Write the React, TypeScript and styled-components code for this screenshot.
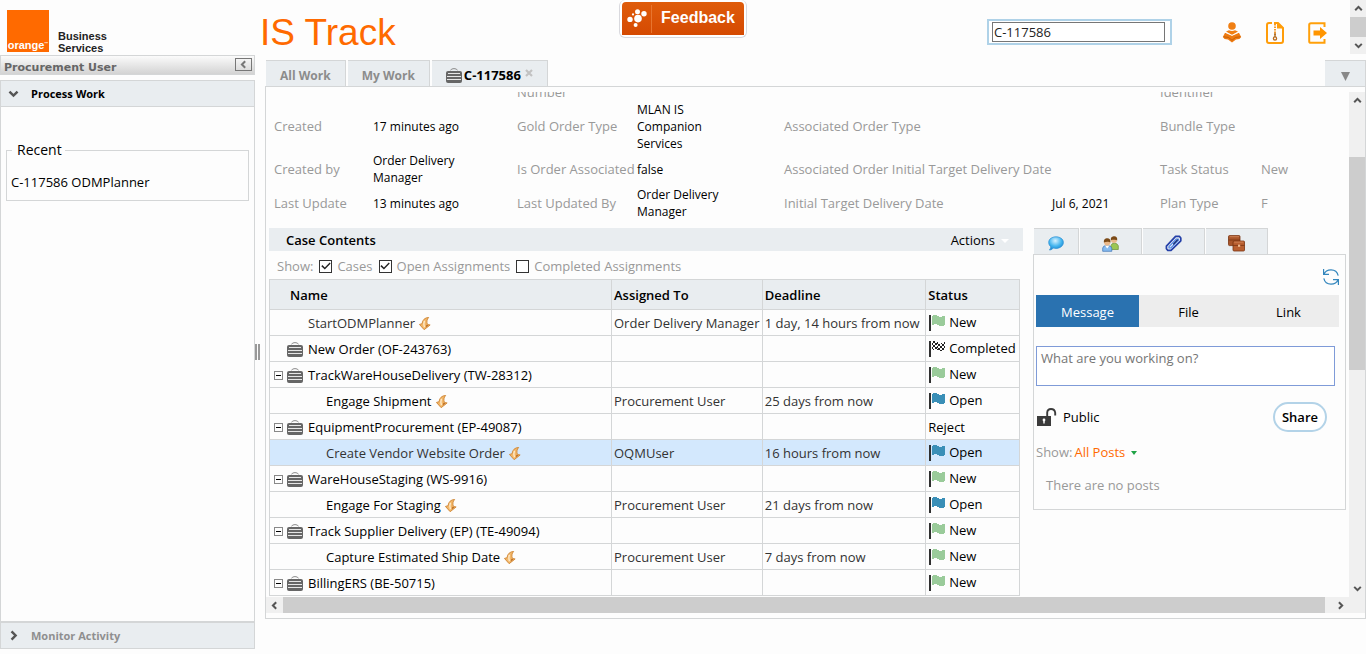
import React from "react";
import styled, { createGlobalStyle, css } from "styled-components";

const line = "#d4d6d7";
const panel = "#e9edf0";
const grey = "#999999";
const orange = "#ff6a00";

const GlobalStyle = createGlobalStyle`
  * { box-sizing: border-box; }
  body {
    margin: 0;
    background: #fdfdfd;
    color: #000;
    font: 13px/17px "Open Sans", "Noto Sans", sans-serif;
  }
  button {
    font: inherit;
    color: inherit;
    background: none;
    border: 0;
    padding: 0;
    cursor: pointer;
  }
  a { color: inherit; text-decoration: none; }
  svg { display: block; flex: none; }
`;

const Page = styled.div`
  display: flex;
  flex-direction: column;
  min-height: 100vh;
  overflow: hidden;
`;

/* ---------- header ---------- */

const Header = styled.header`
  display: grid;
  grid-template-columns: 1fr auto 1fr;
  height: 55px;
`;

const BrandArea = styled.div`
  display: flex;
  align-items: flex-start;
`;

const Brand = styled.a`
  display: flex;
  align-items: flex-end;
  gap: 9px;
  width: 260px;
  padding: 10px 0 0 7px;
`;

const LogoSquare = styled.span`
  display: flex;
  align-items: flex-end;
  justify-content: center;
  width: 42px;
  height: 42px;
  background: ${orange};
  color: #fff;
  font: bold 11px/13px "Liberation Sans", Arial, sans-serif;

  sup {
    font-size: 4px;
    line-height: 8px;
    align-self: flex-end;
    margin-bottom: 4px;
  }
`;

const BrandName = styled.span`
  font: bold 11px/12px "Liberation Sans", Arial, sans-serif;
  color: #222;
  margin-bottom: -2px;
`;

const Title = styled.h1`
  margin: 0;
  padding-top: 12px;
  color: ${orange};
  font: 37px/42px "Liberation Sans", Arial, sans-serif;
  white-space: nowrap;
`;

const FeedbackButton = styled.button`
  display: flex;
  align-self: start;
  align-items: stretch;
  height: 38px;
  border: 1px solid #d9d9de;
  border-top: 0;
  border-radius: 6px;
  padding: 2px;
  background: #fff;
`;

const FeedbackFace = styled.span`
  display: flex;
  align-items: center;
  width: 122px;
  border-radius: 4px 4px 0 0;
  background: linear-gradient(#df5c0b, #d54a02);
  color: #fff;
  font: bold 16px/20px "Liberation Sans", Arial, sans-serif;
`;

const FeedbackMark = styled.span`
  display: flex;
  width: 30px;
  height: 28px;
  align-items: center;
  justify-content: center;
  border-right: 1px solid #e8752f;
`;

const FeedbackLabel = styled.span`
  flex: 1;
  padding-bottom: 2px;
  text-align: center;
`;

const HeaderTools = styled.div`
  display: flex;
  justify-content: flex-end;
  align-items: flex-start;
`;

const SearchFrame = styled.div`
  width: 185px;
  height: 26px;
  margin: 19px 50px 0 0;
  padding: 1px 5px 1px 3px;
  border: 2px solid #afd2e8;
  background: #fff;
`;

const SearchInput = styled.input`
  display: block;
  width: 100%;
  height: 20px;
  padding: 0 1px;
  border: 1px solid #767676;
  border-radius: 0;
  color: #222;
  font: inherit;
`;

const ToolIcons = styled.nav`
  display: flex;
  gap: 23px;
  padding: 22px 22px 0 0;
`;

const ScrollTrack = styled.div<{ $horizontal?: boolean }>`
  display: flex;
  flex: none;
  justify-content: space-between;
  background: #f0f0f0;
  ${(p) =>
    p.$horizontal
      ? css`
          height: 16px;
        `
      : css`
          flex-direction: column;
          width: 16px;
        `}
`;

const ScrollArrow = styled.button<{ $horizontal?: boolean }>`
  display: flex;
  flex: none;
  align-items: center;
  justify-content: center;
  width: ${(p) => (p.$horizontal ? 17 : 16)}px;
  height: ${(p) => (p.$horizontal ? 16 : 17)}px;
  color: #555;
`;

const ScrollThumb = styled.div`
  background: #cdcdcd;
`;

const HeaderThumb = styled(ScrollThumb)`
  height: 20px;
`;

/* ---------- body ---------- */

const Body = styled.div`
  display: grid;
  flex: 1;
  grid-template-columns: 255px 10px minmax(0, 1fr);
  padding-bottom: 5px;
`;

const Sidebar = styled.aside`
  display: flex;
  flex-direction: column;
`;

const UserBar = styled.div`
  display: flex;
  align-items: flex-end;
  justify-content: space-between;
  height: 20px;
  margin-bottom: 5px;
  padding: 0 2px 0 3px;
  border: 1px solid ${line};
  background: linear-gradient(#fbfbfb, #d3d3d3);
  color: #666;
  font: bold 11px/12px "DejaVu Sans", Verdana, sans-serif;
`;

const CollapseButton = styled.button`
  display: flex;
  align-self: flex-start;
  align-items: center;
  justify-content: center;
  width: 17px;
  height: 13px;
  margin-top: 2px;
  border: 1px solid #777;
  color: #777;
`;

const AccordionHead = styled.button<{ $muted?: boolean }>`
  display: flex;
  align-items: center;
  height: ${(p) => (p.$muted ? 28 : 27)}px;
  padding: 0 7px;
  gap: 12px;
  border: 1px solid ${line};
  border-top-width: ${(p) => (p.$muted ? 2 : 1)}px;
  background: ${panel};
  color: ${(p) => (p.$muted ? "#8f8f8f" : "#000")};
  font-size: 11px;
  font-weight: 700;

  svg { color: #555; }
`;

const AccordionBody = styled.div`
  flex: 1;
  padding: 34px 5px 0;
  border: solid ${line};
  border-width: 0 1px;
`;

const Recent = styled.fieldset`
  height: 60px;
  margin: 0;
  padding: 15px 4px 0;
  border: 1px solid ${line};

  legend {
    margin-left: 1px;
    padding: 0 3px 0 5px;
    font-size: 14px;
    line-height: 18px;
  }
`;

const Splitter = styled.div`
  align-self: center;
  width: 5px;
  height: 16px;
  border: solid #999;
  border-width: 0 2px;
`;

const Main = styled.main`
  padding-top: 5px;
`;

const TabStrip = styled.div`
  display: flex;
  gap: 2px;
  height: 26px;
  padding-left: 1px;
`;

const Tab = styled.button<{ $active?: boolean }>`
  display: flex;
  align-items: center;
  gap: 2px;
  padding: 3px 14px 0;
  border: solid ${line};
  border-width: 1px 1px 0 0;
  background: ${panel};
  color: ${(p) => (p.$active ? "#000" : "#8c8c8c")};
  font-size: ${(p) => (p.$active ? 13 : 12)}px;
  font-weight: 700;
  white-space: nowrap;

  svg:last-child { align-self: flex-start; margin: 5px 0 0 2px; }
`;

const TabMenu = styled.button`
  width: 41px;
  margin-left: auto;
  border: solid ${line};
  border-width: 1px 1px 0 0;
  background: ${panel};
  display: flex;
  align-items: center;
  justify-content: center;
  padding-top: 6px;
`;

const Workspace = styled.section`
  display: grid;
  grid-template-columns: minmax(0, 1fr) 16px;
  padding: 5px 0 5px;
  border: 1px solid ${line};
`;

const Content = styled.div`
  min-width: 0;
`;

const SideTrack = styled(ScrollTrack)`
  display: grid;
  grid-template-rows: 17px 48px 213px 1fr 17px 16px;
`;

const BottomTrack = styled(ScrollTrack)`
  display: grid;
  grid-template-columns: 17px 1fr 7px 17px;
  margin: 1px 0 0;
`;

/* ---------- case details ---------- */

const Details = styled.dl`
  display: grid;
  grid-template-columns: 99fr 144fr 120fr 147fr 268fr 108fr 101fr 88fr;
  align-items: center;
  margin: 0 0 8px;
  padding-left: 8px;
`;

const Label = styled.dt<{ $cut?: boolean }>`
  color: ${grey};
  white-space: nowrap;
  ${(p) =>
    p.$cut &&
    css`
      display: flex;
      align-items: flex-end;
      height: 9px;
      overflow: hidden;
    `}
`;

const Value = styled.dd<{ $muted?: boolean }>`
  margin: 0;
  padding-right: 44px;
  font-size: ${(p) => (p.$muted ? 13 : 12)}px;
  color: ${(p) => (p.$muted ? grey : "#000")};
`;

const Columns = styled.div`
  display: flex;
  align-items: flex-start;
  gap: 10px;
  padding: 0 3px;
`;

const Contents = styled.section`
  flex: 1;
  min-width: 0;
`;

const ContentsHead = styled.header`
  display: flex;
  align-items: center;
  justify-content: space-between;
  height: 23px;
  padding: 2px 14px 0 17px;
  background: ${panel};

  h2 {
    margin: 0;
    font-size: 13px;
    font-weight: 600;
  }
`;

const ActionsButton = styled.button`
  display: flex;
  align-items: center;
  gap: 6px;
`;

const Filters = styled.div`
  display: flex;
  align-items: center;
  height: 28px;
  padding: 2px 0 0 8px;
  gap: 6px;
  color: ${grey};
`;

const Filter = styled.label`
  display: flex;
  align-items: center;
  gap: 5px;
`;

const CheckBox = styled.input`
  appearance: none;
  display: grid;
  width: 13px;
  height: 13px;
  margin: 0;
  border: 1px solid #333;
  background: #fff;

  &:checked::before {
    content: "";
    background: #222;
    clip-path: polygon(8% 52%, 18% 42%, 40% 64%, 84% 18%, 93% 27%, 40% 82%);
  }
`;

const CaseTable = styled.table`
  width: calc(100% - 3px);
  border-collapse: collapse;
  table-layout: fixed;

  th,
  td {
    height: 26px;
    padding: 2px 2px 0;
    border: 1px solid ${line};
    text-align: left;
    white-space: nowrap;
    overflow: hidden;
  }
  th {
    height: 30px;
    background: ${panel};
    font-weight: 600;
  }
  th:first-child { padding-left: 20px; }
`;

const CaseRow = styled.tr<{ $selected?: boolean }>`
  background: ${(p) => (p.$selected ? "#d3e8fd" : "transparent")};
`;

const NameCell = styled.div<{ $indent: number; $soft?: boolean }>`
  display: flex;
  align-items: center;
  gap: 4px;
  padding-left: ${(p) => p.$indent}px;
  color: ${(p) => (p.$soft ? "#333" : "#000")};
`;

const NameText = styled.span`
  padding-left: 1px;
`;

const Expander = styled.button<{ $hidden?: boolean }>`
  display: flex;
  align-items: center;
  justify-content: center;
  width: 9px;
  height: 9px;
  border: 1px solid #888;
  visibility: ${(p) => (p.$hidden ? "hidden" : "visible")};

  &::before {
    content: "";
    width: 5px;
    height: 1px;
    background: #000;
  }
`;

const Soft = styled.td`
  color: #333;
`;

const StatusCell = styled.div`
  display: flex;
  align-items: center;
  gap: 4px;
  padding: 0 0 2px 1px;
`;

/* ---------- posts ---------- */

const Pulse = styled.aside`
  flex: none;
  width: 313px;
`;

const PulseTabs = styled.div`
  display: flex;
  gap: 1px;
  height: 26px;
  padding-left: 1px;
`;

const PulseTab = styled.button<{ $narrow?: boolean }>`
  display: flex;
  align-items: center;
  justify-content: center;
  width: ${(p) => (p.$narrow ? 45 : 62)}px;
  padding-top: 4px;
  border: solid ${line};
  border-width: 1px 1px 0 0;
  background: ${panel};
`;

const PulseBox = styled.div`
  padding: 14px 6px 15px 2px;
  border: 1px solid ${line};
`;

const Refresh = styled.button`
  display: block;
  margin-left: auto;
`;

const Segments = styled.div`
  display: grid;
  grid-template-columns: 103fr 99fr 101fr;
  margin-top: 10px;
  background: #ededed;
`;

const Segment = styled.button<{ $active?: boolean }>`
  height: 32px;
  padding-top: 2px;
  background: ${(p) => (p.$active ? "#2a72b0" : "transparent")};
  color: ${(p) => (p.$active ? "#fff" : "#000")};
`;

const Composer = styled.textarea`
  display: block;
  width: calc(100% - 4px);
  height: 40px;
  margin: 19px 0 16px;
  padding: 3px 4px;
  border: 1px solid #7f9bd8;
  resize: none;
  font: inherit;

  &::placeholder { color: #757575; }
`;

const ShareRow = styled.div`
  display: flex;
  align-items: center;
  gap: 6px;
  padding-right: 12px;
`;

const ShareButton = styled.button`
  width: 54px;
  height: 30px;
  margin-left: auto;
  border: 2px solid #b3d3e8;
  border-radius: 15px;
  background: #fff;
  font-weight: 600;
`;

const ShowRow = styled.div`
  display: flex;
  align-items: center;
  gap: 2px;
  margin: 12px 0 16px;
  color: ${grey};
`;

const AllPosts = styled.button`
  display: flex;
  align-items: center;
  gap: 6px;
  color: ${orange};
`;

const Empty = styled.p`
  margin: 0;
  padding-left: 10px;
  color: ${grey};
`;

/* ---------- drawings ---------- */

const Chevron = ({ dir, size = 9 }: { dir: "up" | "down" | "left" | "right"; size?: number }) => {
  const paths = {
    up: "M1.2 6.2 4.5 2.9 7.8 6.2",
    down: "M1.2 2.9 4.5 6.2 7.8 2.9",
    left: "M6.2 1.2 2.9 4.5 6.2 7.8",
    right: "M2.9 1.2 6.2 4.5 2.9 7.8",
  };
  return (
    <svg width={size} height={size} viewBox="0 0 9 9" fill="none" stroke="currentColor" strokeWidth="2">
      <path d={paths[dir]} />
    </svg>
  );
};

const Caret = ({ w, h, color }: { w: number; h: number; color: string }) => (
  <svg width={w} height={h} viewBox="0 0 10 10" preserveAspectRatio="none">
    <path d="M0 0H10L5 10Z" fill={color} />
  </svg>
);

const Briefcase = () => (
  <svg width="16" height="15" viewBox="0 0 16 15">
    <path d="M4.5 2.4Q5 .6 8 .6T11.5 2.4" fill="none" stroke="#8a8a8a" />
    <rect x="0" y="3" width="16" height="12" rx="2" fill="#666" />
    <path d="M2 5.5H14M1 8.5H15M1 11.5H15" stroke="#e6e6e6" />
  </svg>
);

const Bolt = () => (
  <svg width="12" height="13" viewBox="0.6 0.2 11 12.4">
    <path
      d="M9.6 .6C6 .8 3.6 3 3.3 6.6L.8 7.3 5.3 12.3 11 7.8 8.4 7.3C7.6 5 7.6 2.6 9.6 .6Z"
      fill="#f3b768"
      stroke="#d0893a"
      strokeWidth=".9"
    />
    <path d="M5.6 3.8C4.8 5.6 5 8 5.6 10" fill="none" stroke="#fde8c6" strokeWidth="1.4" />
    <path d="M7.4 7.6 9.4 8 6.8 10.2Z" fill="#b86a24" />
  </svg>
);

const Flag = ({ kind }: { kind: "New" | "Open" | "Completed" }) => (
  <svg width="16" height="16" viewBox="0 0 16 16" shapeRendering="crispEdges">
    <rect width="2" height="16" fill="#2f2f2f" />
    {kind === "Completed" ? (
      <path
        d="M4 0h2v2h-2zM8 1h1v2h-1zM12 2h1v1h-1zM15 1h1v2h-1zM3 2h1v2h-1zM6 2h2v2h-2zM9 3h2v2h-2zM13 3h2v2h-2zM4 4h2v2h-2zM8 5h1v2h-1zM11 5h2v2h-2zM15 5h1v2h-1zM3 6h1v2h-1zM6 6h2v2h-2zM9 7h2v2h-2zM13 7h2v2h-2zM4 8h1v1h-1zM8 8h1v1h-1zM11 9h2v1h-2z"
        fill="#222"
      />
    ) : (
      <path
        d="M3 1h1v-1h4v1h2v1h3v-1h3v9h-1v1h-5v-1h-2v-1h-3v1h-2z"
        fill={kind === "New" ? "#9acb9a" : "#3a8fb7"}
      />
    )}
  </svg>
);

const Reader = () => (
  <svg width="20" height="21" viewBox="0 0 20 21">
    <circle cx="10" cy="4" r="3.8" fill="#f07f13" />
    <path d="M4 9.6 7 8.2Q10 9.8 13 8.2L16 9.6 10 13Z" fill="#f07f13" />
    <path d="M3.2 10.6 10 13.6 16.8 10.6 19.2 15 17.4 17 14 17.4 10 20.6 6 17.4 2.6 17 .8 15Z" fill="#ee7a10" />
    <path d="M2.8 10.2 10 13.4 17.2 10.2" fill="none" stroke="#fff" strokeWidth=".9" />
    <path d="M1.6 14.8 6.4 15.4 10 18.2 13.6 15.4 18.4 14.8" fill="none" stroke="#b9590a" strokeWidth=".8" />
  </svg>
);

const ZipFile = () => (
  <svg width="20" height="22" viewBox="0 0 20 22" fill="none" stroke="#ff9d0a" strokeWidth="2">
    <path d="M7 1H4A2 2 0 0 0 2 3V19A2 2 0 0 0 4 21H6M9 1H13L18 6V19A2 2 0 0 1 16 21H6" strokeWidth="2" />
    <path d="M12 0V6.5H19Z" fill="#ff9d0a" stroke="none" />
    <path d="M10 2V13" stroke="#f49a2c" strokeDasharray="1.5 1" />
    <path d="M10 11V15" stroke="#a8641c" strokeWidth="1.4" />
    <circle cx="10" cy="16.4" r="1.6" stroke="#b86a1c" strokeWidth="1.3" />
  </svg>
);

const SignOut = () => (
  <svg width="20" height="22" viewBox="0 0 20 22">
    <path d="M16.5 5V1.2H3Q1.2 1.2 1.2 2.8V19.2Q1.2 20.8 3 20.8H16.5V17" fill="none" stroke="#ffa00a" strokeWidth="2" />
    <path d="M5.5 8.5H12V5L19 11 12 17V13.5H5.5Z" fill="#ff9500" />
  </svg>
);

const FeedbackDots = () => (
  <svg width="20" height="19" viewBox="0 0 20 19" fill="#fff">
    <circle cx="10.5" cy="2.8" r="2.5" />
    <circle cx="17" cy="4.8" r="2.7" />
    <circle cx="11" cy="9.6" r="3.8" />
    <circle cx="3" cy="10.4" r="2.7" />
    <circle cx="8.6" cy="16" r="2" />
    <circle cx="6" cy="5.4" r="1.1" />
  </svg>
);

const Speech = () => (
  <svg width="16" height="15" viewBox="0 0 16 15">
    <defs>
      <radialGradient id="speech" cx=".45" cy=".3" r=".7">
        <stop offset="0" stopColor="#d6f1ff" />
        <stop offset=".6" stopColor="#42b4ee" />
        <stop offset="1" stopColor="#1d86cf" />
      </radialGradient>
    </defs>
    <path
      d="M8 .8C12 .8 15.4 3 15.4 6.4S12 12.4 8 12.4C7 12.4 6 12.3 5.2 12 4.5 13.2 3 14 1.4 14 2.4 13 2.8 11.7 2.6 10.6 1.4 9.5 .7 8 .7 6.4.7 3 4 .8 8 .8Z"
      fill="url(#speech)"
      stroke="#2b8fd4"
      strokeWidth=".7"
    />
  </svg>
);

const People = () => (
  <svg width="17" height="16" viewBox="0 0 17 16">
    <path d="M9 13.5V9.5Q9.5 7.2 12.5 7.2T16.3 9.8V13.5Z" fill="#9cc653" stroke="#6c8f33" strokeWidth=".7" />
    <circle cx="12" cy="4" r="3" fill="#eab98a" />
    <path d="M8.8 4.2C8.6 1 10.4.3 12.3.3S15.6 1.4 15.2 4.4C14 3.6 11 3.6 8.8 4.2Z" fill="#7b4a17" />
    <path d="M.7 15.3V12Q1 9.4 5 9.4T9.8 12V15.3Z" fill="#86bbf0" stroke="#3971b5" strokeWidth=".7" />
    <path d="M3 9.6 5.2 12.4 7.4 9.6Z" fill="#fff" />
    <circle cx="5.2" cy="6.4" r="3.1" fill="#eab98a" />
    <path d="M1.9 6.4C1.6 3.2 3.2 2.2 5.3 2.2S8.8 3.4 8.4 6.6C7.2 5.4 4 5.4 1.9 6.4Z" fill="#7b4a17" />
  </svg>
);

const Clip = () => (
  <svg width="17" height="17" viewBox="0 0 17 17" fill="none" strokeLinejoin="round" strokeLinecap="round">
    <path d="M1.4 11.2 10.6 1.4H14.4L15.8 3V5.8L6 15.4H2.8L1.4 13.8Z" stroke="#2440a8" strokeWidth="1.7" />
    <path d="M4 11.6 11.4 4H13.4V5.4L5.8 13H4Z" stroke="#4d86ea" strokeWidth="1.2" />
    <path d="M8.6 9 12.4 5" stroke="#13286e" strokeWidth="1.2" />
  </svg>
);

const Cases = () => (
  <svg width="17" height="17" viewBox="0 0 17 17">
    <g stroke="#7a3410" strokeWidth=".8">
      <rect x=".5" y=".6" width="11.5" height="10" rx="1" fill="#a9552a" />
      <path d="M.6 5H12" fill="none" />
      <rect x="5" y="6" width="11.5" height="10" rx="1" fill="#b95f30" />
      <path d="M5 10.4H16.5" fill="none" />
    </g>
    <path d="M10 9.6H12.2V11.8H10Z" fill="#f0b98f" />
    <path d="M1.6 1.7H11M6.2 7.1H15.4" stroke="#d68a5f" strokeWidth=".8" />
  </svg>
);

const RefreshIcon = () => (
  <svg width="16" height="16" viewBox="0 0 16 16" fill="none" stroke="#3386bd" strokeWidth="1.2">
    <path d="M.6 0V5.4H6M1 5.2C2 2.4 4.6.8 8 .8 11.6.8 14.4 3.2 15.2 6.6" />
    <path d="M15.4 16V10.6H10M15 10.8C14 13.6 11.4 15.2 8 15.2 4.4 15.2 1.6 12.8.8 9.4" />
  </svg>
);

const OpenLock = () => (
  <svg width="21" height="18" viewBox="0 0 21 18">
    <path d="M11.2 8V4.6Q11.4 1 15 1T19.2 4.6V7.6" fill="none" stroke="#3b3b3b" strokeWidth="1.9" />
    <rect x="1" y="8" width="14" height="10" fill="#3b3b3b" />
    <circle cx="8" cy="12" r="1.4" fill="#fff" />
    <path d="M7.3 12H8.7V15.6H7.3Z" fill="#fff" />
  </svg>
);

const CloseMark = () => (
  <svg width="8" height="8" viewBox="0 0 8 8" stroke="#c2c2c2" strokeWidth="2.2">
    <path d="M1 1 7 7M7 1 1 7" />
  </svg>
);

/* ---------- data ---------- */

type Status = "New" | "Open" | "Completed" | "Reject";

interface Item {
  name: string;
  kind: "case" | "leaf" | "root" | "child";
  assigned?: string;
  deadline?: string;
  status: Status;
  soft?: boolean;
  selected?: boolean;
}

const items: Item[] = [
  { name: "StartODMPlanner", kind: "root", assigned: "Order Delivery Manager", deadline: "1 day, 14 hours from now", status: "New", soft: true },
  { name: "New Order (OF-243763)", kind: "leaf", status: "Completed" },
  { name: "TrackWareHouseDelivery (TW-28312)", kind: "case", status: "New" },
  { name: "Engage Shipment", kind: "child", assigned: "Procurement User", deadline: "25 days from now", status: "Open" },
  { name: "EquipmentProcurement (EP-49087)", kind: "case", status: "Reject" },
  { name: "Create Vendor Website Order", kind: "child", assigned: "OQMUser", deadline: "16 hours from now", status: "Open", soft: true, selected: true },
  { name: "WareHouseStaging (WS-9916)", kind: "case", status: "New" },
  { name: "Engage For Staging", kind: "child", assigned: "Procurement User", deadline: "21 days from now", status: "Open" },
  { name: "Track Supplier Delivery (EP) (TE-49094)", kind: "case", status: "New" },
  { name: "Capture Estimated Ship Date", kind: "child", assigned: "Procurement User", deadline: "7 days from now", status: "New" },
  { name: "BillingERS (BE-50715)", kind: "case", status: "New" },
];

const indents = { case: 2, leaf: 2, root: 35, child: 53 };

const ItemRow = ({ item }: { item: Item }) => (
  <CaseRow $selected={item.selected}>
    <td>
      <NameCell $indent={indents[item.kind]} $soft={item.soft}>
        {(item.kind === "case" || item.kind === "leaf") && (
          <>
            <Expander $hidden={item.kind === "leaf"} aria-label="Collapse" />
            <Briefcase />
          </>
        )}
        <NameText>{item.name}</NameText>
        {(item.kind === "root" || item.kind === "child") && <Bolt />}
      </NameCell>
    </td>
    <Soft>{item.assigned}</Soft>
    <Soft>{item.deadline}</Soft>
    <td>
      {item.status === "Reject" ? (
        item.status
      ) : (
        <StatusCell>
          <Flag kind={item.status} />
          {item.status}
        </StatusCell>
      )}
    </td>
  </CaseRow>
);

export default function App() {
  return (
    <Page>
      <GlobalStyle />
      <Header>
        <BrandArea>
          <Brand href="#">
            <LogoSquare>
              orange<sup>™</sup>
            </LogoSquare>
            <BrandName>
              Business
              <br />
              Services
            </BrandName>
          </Brand>
          <Title>IS Track</Title>
        </BrandArea>
        <FeedbackButton>
          <FeedbackFace>
            <FeedbackMark>
              <FeedbackDots />
            </FeedbackMark>
            <FeedbackLabel>Feedback</FeedbackLabel>
          </FeedbackFace>
        </FeedbackButton>
        <HeaderTools>
          <SearchFrame>
            <SearchInput aria-label="Search" defaultValue="C-117586" />
          </SearchFrame>
          <ToolIcons>
            <a href="#" aria-label="Profile"><Reader /></a>
            <a href="#" aria-label="Archive"><ZipFile /></a>
            <a href="#" aria-label="Sign out"><SignOut /></a>
          </ToolIcons>
          <ScrollTrack>
            <ScrollArrow aria-label="Scroll up"><Chevron dir="up" /></ScrollArrow>
            <HeaderThumb />
            <ScrollArrow aria-label="Scroll down"><Chevron dir="down" /></ScrollArrow>
          </ScrollTrack>
        </HeaderTools>
      </Header>

      <Body>
        <Sidebar>
          <UserBar>
            Procurement User
            <CollapseButton aria-label="Collapse sidebar"><Chevron dir="left" /></CollapseButton>
          </UserBar>
          <AccordionHead>
            <Chevron dir="down" size={11} />
            Process Work
          </AccordionHead>
          <AccordionBody>
            <Recent>
              <legend>Recent</legend>
              <a href="#">C-117586 ODMPlanner</a>
            </Recent>
          </AccordionBody>
          <AccordionHead $muted>
            <Chevron dir="right" size={11} />
            Monitor Activity
          </AccordionHead>
        </Sidebar>

        <Splitter />

        <Main>
          <TabStrip>
            <Tab>All Work</Tab>
            <Tab>My Work</Tab>
            <Tab $active>
              <Briefcase />
              C-117586
              <CloseMark />
            </Tab>
            <TabMenu aria-label="Tab list"><Caret w={9} h={9} color="#888" /></TabMenu>
          </TabStrip>

          <Workspace>
            <Content>
              <Details>
                <Label $cut />
                <Value />
                <Label $cut>Number</Label>
                <Value />
                <Label $cut />
                <Value />
                <Label $cut>Identifier</Label>
                <Value />

                <Label>Created</Label>
                <Value>17 minutes ago</Value>
                <Label>Gold Order Type</Label>
                <Value>MLAN IS Companion Services</Value>
                <Label>Associated Order Type</Label>
                <Value />
                <Label>Bundle Type</Label>
                <Value />

                <Label>Created by</Label>
                <Value>Order Delivery Manager</Value>
                <Label>Is Order Associated</Label>
                <Value>false</Value>
                <Label>Associated Order Initial Target Delivery Date</Label>
                <Value />
                <Label>Task Status</Label>
                <Value $muted>New</Value>

                <Label>Last Update</Label>
                <Value>13 minutes ago</Value>
                <Label>Last Updated By</Label>
                <Value>Order Delivery Manager</Value>
                <Label>Initial Target Delivery Date</Label>
                <Value>Jul 6, 2021</Value>
                <Label>Plan Type</Label>
                <Value $muted>F</Value>
              </Details>

              <Columns>
                <Contents>
                  <ContentsHead>
                    <h2>Case Contents</h2>
                    <ActionsButton>
                      Actions
                      <Caret w={8} h={4} color="#fff" />
                    </ActionsButton>
                  </ContentsHead>
                  <Filters>
                    Show:
                    <Filter><CheckBox type="checkbox" defaultChecked />Cases</Filter>
                    <Filter><CheckBox type="checkbox" defaultChecked />Open Assignments</Filter>
                    <Filter><CheckBox type="checkbox" />Completed Assignments</Filter>
                  </Filters>
                  <CaseTable>
                    <colgroup>
                      <col style={{ width: "45.6%" }} />
                      <col style={{ width: "20.1%" }} />
                      <col style={{ width: "21.8%" }} />
                      <col style={{ width: "12.5%" }} />
                    </colgroup>
                    <thead>
                      <tr>
                        <th>Name</th>
                        <th>Assigned To</th>
                        <th>Deadline</th>
                        <th>Status</th>
                      </tr>
                    </thead>
                    <tbody>
                      {items.map((item) => (
                        <ItemRow key={item.name} item={item} />
                      ))}
                    </tbody>
                  </CaseTable>
                </Contents>

                <Pulse>
                  <PulseTabs>
                    <PulseTab $narrow aria-label="Posts"><Speech /></PulseTab>
                    <PulseTab aria-label="Participants"><People /></PulseTab>
                    <PulseTab aria-label="Attachments"><Clip /></PulseTab>
                    <PulseTab aria-label="Related cases"><Cases /></PulseTab>
                  </PulseTabs>
                  <PulseBox>
                    <Refresh aria-label="Refresh"><RefreshIcon /></Refresh>
                    <Segments>
                      <Segment $active>Message</Segment>
                      <Segment>File</Segment>
                      <Segment>Link</Segment>
                    </Segments>
                    <Composer aria-label="Message" placeholder="What are you working on?" />
                    <ShareRow>
                      <OpenLock />
                      Public
                      <ShareButton>Share</ShareButton>
                    </ShareRow>
                    <ShowRow>
                      Show:
                      <AllPosts>
                        All Posts
                        <Caret w={6} h={4} color="#1fa345" />
                      </AllPosts>
                    </ShowRow>
                    <Empty>There are no posts</Empty>
                  </PulseBox>
                </Pulse>
              </Columns>

              <BottomTrack $horizontal>
                <ScrollArrow $horizontal aria-label="Scroll left"><Chevron dir="left" /></ScrollArrow>
                <ScrollThumb />
                <span />
                <ScrollArrow $horizontal aria-label="Scroll right"><Chevron dir="right" /></ScrollArrow>
              </BottomTrack>
            </Content>
            <SideTrack>
              <ScrollArrow aria-label="Scroll up"><Chevron dir="up" /></ScrollArrow>
              <span />
              <ScrollThumb />
              <span />
              <ScrollArrow aria-label="Scroll down"><Chevron dir="down" /></ScrollArrow>
            </SideTrack>
          </Workspace>
        </Main>
      </Body>
    </Page>
  );
}
